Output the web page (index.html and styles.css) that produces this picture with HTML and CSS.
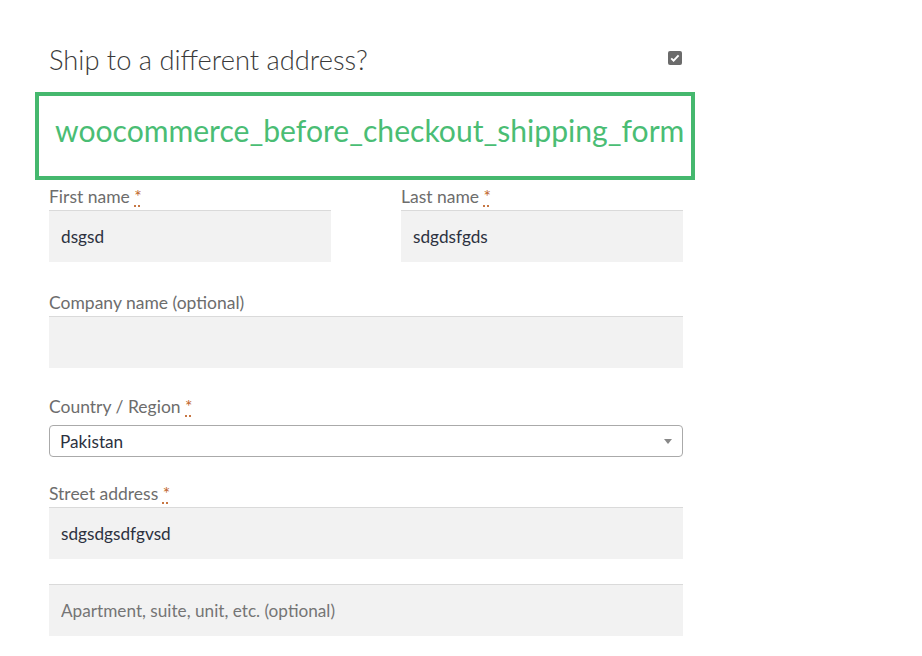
FILE: index.html
```html
<!DOCTYPE html>
<html lang="en">
<head>
    <meta charset="UTF-8">
    <meta name="viewport" content="width=device-width, initial-scale=1.0">
    <title>Shipping details</title>
    <link rel="stylesheet" href="styles.css">
</head>
<body>
    <div class="container">
        <h3 class="ship-title">
            <label for="shipDifferent">Ship to a different address?</label>
            <input type="checkbox" id="shipDifferent" class="ship-check" checked>
        </h3>

        <!-- Hook marker -->
        <div class="hook-box">woocommerce_before_checkout_shipping_form</div>

        <div class="field-row">
            <p class="form-row half">
                <label for="firstName">First name <abbr class="required" title="required">*</abbr></label>
                <input type="text" id="firstName" class="input-text" value="dsgsd">
            </p>
            <p class="form-row half">
                <label for="lastName">Last name <abbr class="required" title="required">*</abbr></label>
                <input type="text" id="lastName" class="input-text" value="sdgdsfgds">
            </p>
        </div>

        <p class="form-row">
            <label for="company">Company name (optional)</label>
            <input type="text" id="company" class="input-text" value="">
        </p>

        <p class="form-row country-row">
            <label for="country">Country / Region <abbr class="required" title="required">*</abbr></label>
            <span class="select-wrap">
                <select id="country" class="country-select">
                    <option>Pakistan</option>
                </select>
            </span>
        </p>

        <p class="form-row street-row">
            <label for="street1">Street address <abbr class="required" title="required">*</abbr></label>
            <input type="text" id="street1" class="input-text" value="sdgsdgsdfgvsd">
        </p>

        <p class="form-row">
            <input type="text" id="street2" class="input-text" placeholder="Apartment, suite, unit, etc. (optional)">
        </p>
    </div>
</body>
</html>
```

FILE: styles.css
```css
/* General Styles */
body {
    font-family: Lato, "Open Sans", sans-serif;
    background-color: #ffffff;
    margin: 0;
    padding: 0;
}

.container {
    width: 634px;
    padding: 33px 0 0 49px;
}

/* Title */
.ship-title {
    display: flex;
    justify-content: space-between;
    align-items: center;
    margin: 0;
    height: 52px;
    font-size: 27.3px;
    font-weight: 300;
    color: #3a3a3a;
}

.ship-check {
    appearance: none;
    width: 14px;
    height: 14px;
    margin: 0 1px 3px 0;
    border-radius: 2px;
    background: #6b6b6b url("data:image/svg+xml,%3Csvg xmlns='http://www.w3.org/2000/svg' viewBox='0 0 14 14'%3E%3Cpath d='M3.2 7.3l2.4 2.4 5-5.4' fill='none' stroke='white' stroke-width='1.9'/%3E%3C/svg%3E") center / 14px no-repeat;
}

/* Hook marker box */
.hook-box {
    margin: 7px 0 4px -14px;
    width: 636px;
    height: 80px;
    border: 4px solid #45b86e;
    padding-left: 16px;
    font-size: 30.1px;
    line-height: 68px;
    color: #4abd74;
    white-space: nowrap;
}

/* Form rows */
.field-row {
    display: flex;
    justify-content: space-between;
    margin-bottom: 28px;
}

.form-row {
    margin: 0 0 26px;
}

.field-row .form-row {
    margin: 0;
}

.form-row.half {
    width: 282px;
}

.form-row.country-row {
    margin-bottom: 24px;
}

.form-row.street-row {
    margin-bottom: 25px;
}

.form-row label {
    display: block;
    font-size: 17.5px;
    line-height: 26px;
    color: #6d6d6d;
}

.required {
    color: #c0652b;
    text-decoration: underline dotted;
    text-underline-offset: 3px;
    border: none;
}

.input-text {
    display: block;
    box-sizing: border-box;
    width: 100%;
    height: 52px;
    margin: 0;
    padding: 0 12px;
    border: none;
    border-top: 1px solid #dadada;
    background-color: #f2f2f2;
    font-family: inherit;
    font-size: 17.2px;
    color: #2c3140;
    outline: none;
}

.input-text::placeholder {
    color: #757575;
}

/* Country select */
.select-wrap {
    display: block;
    position: relative;
    margin-top: 5px;
}

.select-wrap::after {
    content: "";
    position: absolute;
    right: 11px;
    top: 14px;
    border-top: 5px solid #888;
    border-left: 4px solid transparent;
    border-right: 4px solid transparent;
}

.country-select {
    appearance: none;
    display: block;
    width: 100%;
    height: 32px;
    padding: 0 10px;
    border: 1px solid #aaaaaa;
    border-radius: 4px;
    background-color: #ffffff;
    font-family: inherit;
    font-size: 17.2px;
    color: #2c3140;
}
```
